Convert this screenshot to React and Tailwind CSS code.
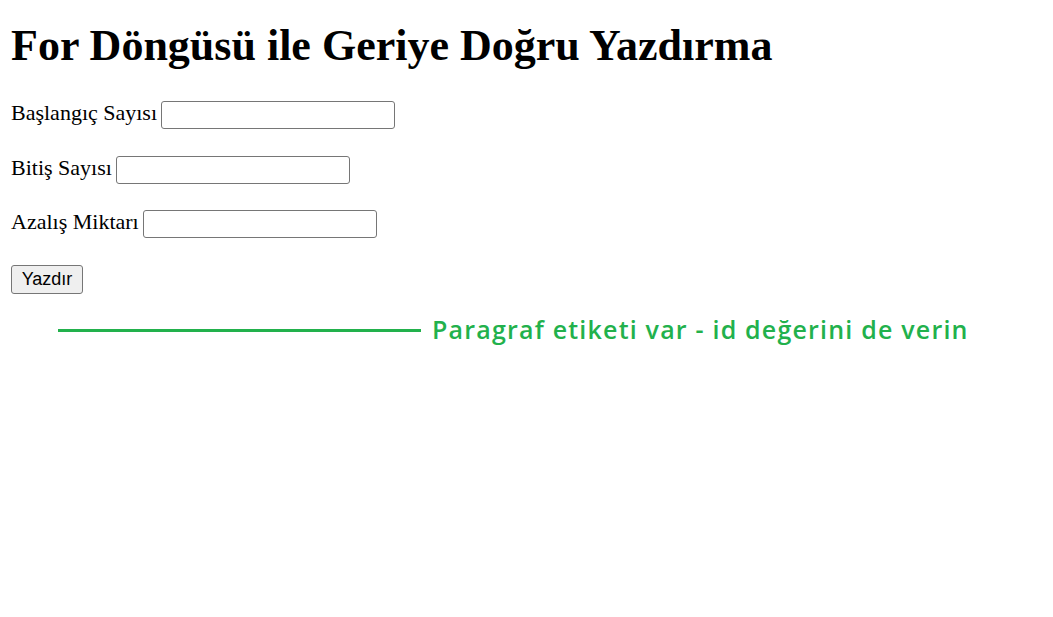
import React from 'react';

const rows = [
    { label: 'Başlangıç Sayısı', id: 'baslangic' },
    { label: 'Bitiş Sayısı', id: 'bitis' },
    { label: 'Azalış Miktarı', id: 'azalis' },
];

const App = () => {
    return (
        <div className="min-h-screen bg-white px-[11px] pt-[21px] text-black" style={{ fontFamily: '"Liberation Serif", "Times New Roman", serif' }}>
            <h1 className="text-[44px] font-bold leading-[50px]">For Döngüsü ile Geriye Doğru Yazdırma</h1>

            <div className="mt-[30px] flex flex-col gap-[26.5px]">
                {rows.map((row) => (
                    <div key={row.id} className="flex items-start gap-[4px]">
                        <label htmlFor={row.id} className="text-[22px] leading-[23px]">{row.label}</label>
                        <input
                            id={row.id}
                            type="text"
                            className="h-[28px] w-[234px] rounded-[3px] border border-[#767676] bg-white px-[3px]"
                        />
                    </div>
                ))}
                <div className="flex">
                    <button
                        className="h-[29px] w-[72px] rounded-[3px] border border-[#767676] bg-[#efefef] text-[18px] leading-[27px] text-black"
                        style={{ fontFamily: '"Liberation Sans", Arial, sans-serif' }}
                    >
                        Yazdır
                    </button>
                </div>
            </div>

            {/* annotation overlay */}
            <div className="mt-[20px] flex h-[34px] items-center">
                <div className="ml-[47px] h-[3px] w-[363px] bg-[#22b14c]" />
                <p
                    id="sonuc"
                    className="mb-[4px] ml-[11px] text-[25px] font-semibold leading-[34px] tracking-[1.2px] text-[#22b14c]"
                    style={{ fontFamily: '"Open Sans", "Noto Sans", sans-serif' }}
                >
                    Paragraf etiketi var - id değerini de verin
                </p>
            </div>
        </div>
    );
};

export default App;
